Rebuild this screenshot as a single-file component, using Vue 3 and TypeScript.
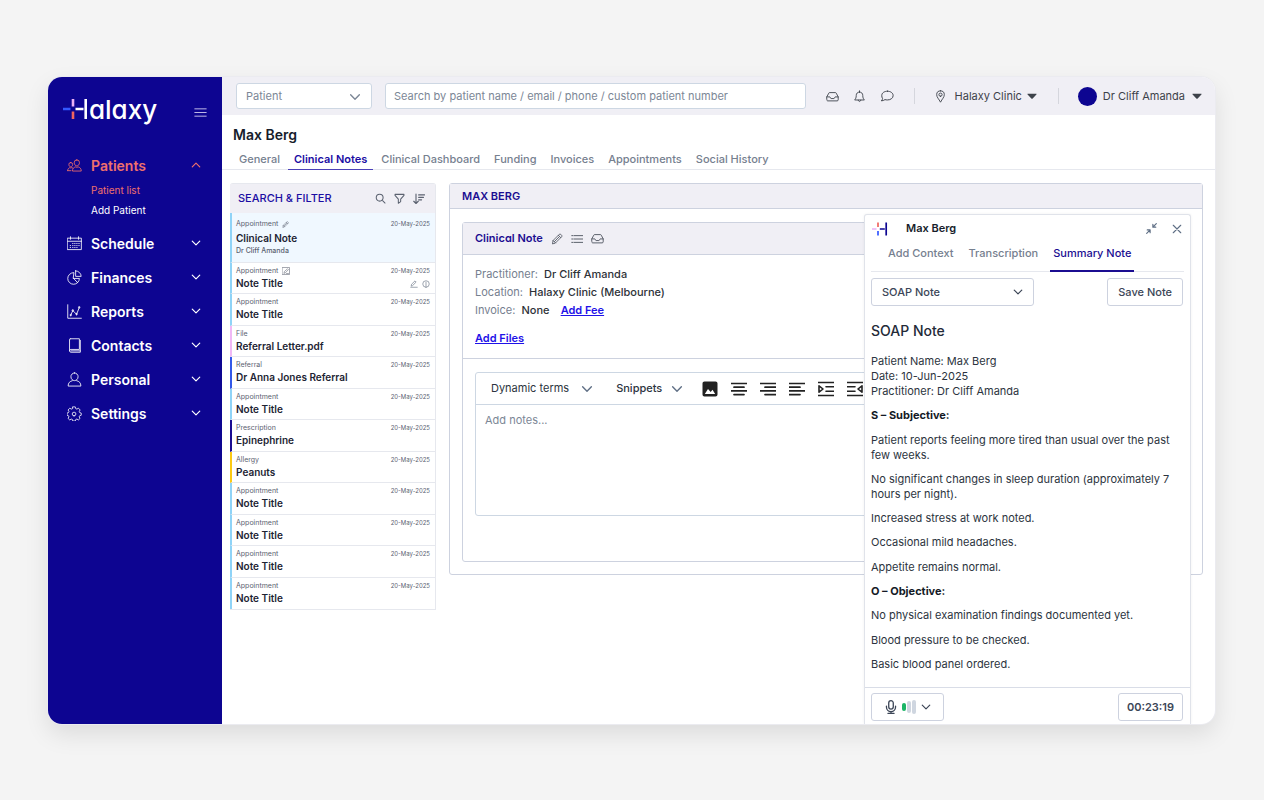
<script setup lang="ts">
import { h, ref } from 'vue'

type IconDef = { d: string[]; fill?: boolean; w?: number; box?: number }

const icons: Record<string, IconDef> = {
  menu: { d: ['M1 3.500h14M1 8h14M1 12.500h14'] },
  down: { d: ['M3 5.5l5 5 5-5'], w: 1.6 },
  up: { d: ['M3 10.5l5-5 5 5'], w: 1.6 },
  caret: { d: ['M2.5 5h11c.6 0 .8.6.4 1l-5 5.3c-.5.5-1.300.5-1.800 0l-5-5.300c-.4-.4-.2-1 .4-1z'], fill: true },
  patients: { d: ['M10.500 2a2.800 2.800 0 0 1 2.800 3c0 1.800-1.200 3.400-2.800 3.400S7.700 6.800 7.700 5a2.800 2.800 0 0 1 2.800-3z', 'M5.800 13.500c0-2.300 1.500-3.500 3.200-4 1 .5 2 .5 3 0 1.700.5 3.200 1.700 3.200 4z', 'M4 4.800a2 2 0 0 1 2 2.200c0 1.400-.9 2.400-2 2.400s-2-1-2-2.400a2 2 0 0 1 2-2.200z', 'M.7 13.500c0-1.700.9-2.700 2.200-3.200.8.4 1.500.4 2.200 0l1 .4M.7 13.500h3.500'], w: 0.9 },
  schedule: { d: ['M.7 2.300h14.600v12.200H.7z', 'M.7 5.600h14.600M3.700.8v2.700M12.300.8v2.700', 'M6 8h.4M8.200 8h.4M10.400 8h.4M12.600 8h.4M3.400 10.200h.4M6 10.200h.4M8.200 10.200h.4M10.400 10.200h.4M12.600 10.200h.4M3.400 12.300h.4M6 12.300h.4M8.200 12.300h.4M10.400 12.300h.4'], w: 0.9 },
  finances: { d: ['M7 2.800a6.200 6.200 0 1 0 6.200 6.200H7z', 'M9.200.9v5.900h5.900A6 6 0 0 0 9.200.9z', 'M7 9l4.300 4.500'], w: 0.9 },
  reports: { d: ['M.8.8v14.400h14.500', 'M4 11.800L6.200 7l4 4L13 4', 'M4 12.600a.8.8 0 1 0 0-1.600.8.8 0 0 0 0 1.600M6.200 7.600a.8.8 0 1 0 0-1.600.8.8 0 0 0 0 1.600M10.200 11.600a.8.8 0 1 0 0-1.600.8.8 0 0 0 0 1.600M13 4.300a.8.8 0 1 0 0-1.600.8.8 0 0 0 0 1.600'], w: 0.9 },
  contacts: { d: ['M3.500.8h9.700v11.400H4.300a1.500 1.500 0 0 0 0 3h9.900V2.500', 'M2.700 13.700V1.800c0-.6.3-1 .8-1M4.500 13.700h9.500'], w: 0.9 },
  personal: { d: ['M8 1a3.800 3.800 0 0 1 3.800 4.100C11.800 7.500 10 9.200 8 9.200S4.200 7.500 4.200 5.100A3.800 3.800 0 0 1 8 1z', 'M5.600 9.300C3 10 1.200 11.500 1.200 15h13.600c0-3.500-1.800-5-4.400-5.700'], w: 0.9 },
  settings: { d: ['M6.600 1h2.800l.5 2 1.300.5 1.800-1 1.900 2-1 1.700.5 1.300 1.700.5v2.500l-1.800.6-.5 1.200 1 1.700-1.900 1.800-1.700-1-1.300.5-.5 1.700H6.600l-.5-1.700-1.300-.5-1.700 1-1.900-1.800 1-1.700-.5-1.200L0 10.500V8l1.700-.5.5-1.300-1-1.700 1.900-2 1.800 1 1.200-.5z', 'M8 11.200a2.100 2.100 0 1 0 0-4.200 2.100 2.100 0 0 0 0 4.200z'], w: 0.9, box: 17 },
  inbox: { d: ['M1 8.500l2.400-4.600c.2-.5.5-.7 1-.7h7.200c.5 0 .8.2 1 .7L15 8.500v3.600c0 .8-.5 1.300-1.300 1.300H2.300c-.8 0-1.300-.5-1.300-1.300z', 'M1 8.500h3.800c.5 0 .5 2 1.500 2h3.400c1 0 1-2 1.500-2H15'] },
  bell: { d: ['M8 1v1.500M8 2.500c-2.700 0-4 1.900-4 4.200 0 3-.9 4.300-2 5.600h12c-1.100-1.300-2-2.600-2-5.600 0-2.300-1.300-4.200-4-4.200z', 'M6.500 12.500c0 2.300 3 2.300 3 0'] },
  chat: { d: ['M8.500 2.500c3.700 0 6.500 2.100 6.500 5s-2.800 5-6.500 5c-1 0-2-.1-2.800-.4-1 .9-2.500 1.400-4.200 1.400.9-.8 1.400-1.700 1.400-2.700C2.300 9.900 2 8.700 2 7.500c0-2.900 2.800-5 6.500-5z'] },
  pin: { d: ['M8 1a4.700 4.700 0 0 1 4.700 4.700C12.700 9 10 11 8 15 6 11 3.300 9 3.300 5.700A4.700 4.700 0 0 1 8 1z', 'M8 7.800a2 2 0 1 0 0-4 2 2 0 0 0 0 4z'] },
  search: { d: ['M6.800 11.800a5 5 0 1 0 0-10 5 5 0 0 0 0 10zM10.400 10.400l4.200 4.200'], w: 1.5 },
  filter: { d: ['M1.500 2h13v1.500L9.700 9v3.500L6.300 15V9L1.500 3.500z'], w: 1.5 },
  sort: { d: ['M4 1.500v12.500M1 11l3 3 3-3M7.500 2.500h8M7.500 5.800h6.500M7.500 9.100h4'], w: 1.5 },
  pencil: { d: ['M2 14l.8-4L11 1.800c.6-.6 1.400-.6 2 0l1.200 1.200c.6.600.6 1.400 0 2L6 13.200z', 'M2.800 10L6 13.200M9.800 3l3.200 3.200M4.600 11.400l6.200-6.200'] },
  list: { d: ['M1 3.500h1.500M1 8h1.500M1 12.500h1.500M4 3.500h11.500M4 8h11.500M4 12.500h11.500'], w: 1.2 },
  editbox: { d: ['M1 1h14v14H1z', 'M4 12l.8-3L11 3.500l1.800 1.800L7 11.300zM9 13h4'] },
  editline: { d: ['M2.500 11.500l.6-3L10 1.800l2.300 2.300-6.800 6.700zM1.500 14.500h13'], w: 1.4 },
  info: { d: ['M8 14.500a6.500 6.500 0 1 0 0-13 6.500 6.500 0 0 0 0 13zM8 4.500v4.500M8 10.500v1.500'], w: 1.4 },
  image: { d: ['M2.500.5h11c1.200 0 2 .8 2 2v11c0 1.200-.8 2-2 2h-11c-1.200 0-2-.8-2-2v-11c0-1.200.8-2 2-2zM2.800 13h10.400L10.500 8.800 8.700 11 6 8z'], fill: true },
  center: { d: ['M0 2.500h16M3 6.200h10M0 9.900h16M3 13.600h10'], w: 1.7 },
  right: { d: ['M0 2.500h16M5 6.200h11M0 9.900h16M5 13.600h11'], w: 1.7 },
  left: { d: ['M0 2.500h16M0 6.200h11M0 9.900h16M0 13.600h11'], w: 1.7 },
  indent: { d: ['M0 1.500h16M8 5.800h8M8 10.200h8M0 14.500h16M1 4.800v6.400L5 8z'], w: 1.6 },
  outdent: { d: ['M0 1.500h16M0 5.800h8M0 10.200h8M0 14.500h16M15 4.800v6.400L11 8z'], w: 1.6 },
  collapse: { d: ['M15 1l-5 5M10 1.800V6h4.200M1 15l5-5M6 14.200V10H1.800'], w: 1.7 },
  close: { d: ['M2 2l12 12M14 2L2 14'], w: 1.8 },
  mic: { d: ['M8 .8a2.600 2.600 0 0 1 2.600 2.600v4.400a2.600 2.600 0 0 1-5.200 0V3.400A2.600 2.600 0 0 1 8 .8z', 'M2.800 7v1a5.200 5.200 0 0 0 10.400 0V7M8 13.200v2M4.500 15.200h7'], w: 1.5 },
}

const Icon = (props: { name: string; size?: number }) => {
  const def = icons[props.name]
  const box = def.box ?? 16
  const size = props.size ?? 14
  return h(
    'svg',
    {
      width: size,
      height: size,
      viewBox: `0 0 ${box} ${box}`,
      fill: def.fill ? 'currentColor' : 'none',
      'fill-rule': 'evenodd',
      stroke: def.fill ? 'none' : 'currentColor',
      'stroke-width': def.w ?? 1.1,
      'stroke-linecap': 'round',
      'stroke-linejoin': 'round',
      'aria-hidden': 'true',
    },
    def.d.map((d) => h('path', { d })),
  )
}
Icon.props = ['name', 'size']

const nav = [
  { label: 'Schedule', icon: 'schedule' },
  { label: 'Finances', icon: 'finances' },
  { label: 'Reports', icon: 'reports' },
  { label: 'Contacts', icon: 'contacts' },
  { label: 'Personal', icon: 'personal' },
  { label: 'Settings', icon: 'settings' },
]

const tabs = ['General', 'Clinical Notes', 'Clinical Dashboard', 'Funding', 'Invoices', 'Appointments', 'Social History']
const activeTab = ref('Clinical Notes')

const panelTabs = ['Add Context', 'Transcription', 'Summary Note']
const activePanelTab = ref('Summary Note')

type Note = { kind: string; title: string; tone: string; edit?: boolean }
const notes: Note[] = [
  { kind: 'Appointment', title: 'Note Title', tone: 'sky', edit: true },
  { kind: 'Appointment', title: 'Note Title', tone: 'sky' },
  { kind: 'File', title: 'Referral Letter.pdf', tone: 'pink' },
  { kind: 'Referral', title: 'Dr Anna Jones Referral', tone: 'blue' },
  { kind: 'Appointment', title: 'Note Title', tone: 'sky' },
  { kind: 'Prescription', title: 'Epinephrine', tone: 'navy' },
  { kind: 'Allergy', title: 'Peanuts', tone: 'yellow' },
  { kind: 'Appointment', title: 'Note Title', tone: 'sky' },
  { kind: 'Appointment', title: 'Note Title', tone: 'sky' },
  { kind: 'Appointment', title: 'Note Title', tone: 'sky' },
  { kind: 'Appointment', title: 'Note Title', tone: 'sky' },
]
const date = '20-May-2025'

const tools = [
  { name: 'image', label: 'Insert image' },
  { name: 'center', label: 'Align centre' },
  { name: 'right', label: 'Align right' },
  { name: 'left', label: 'Align left' },
  { name: 'indent', label: 'Increase indent' },
  { name: 'outdent', label: 'Decrease indent' },
]
</script>

<template>
  <div class="page">
    <div class="window">
      <aside class="sidebar">
        <div class="brand">
          <div class="logo">
            <svg width="24" height="28" viewBox="0 0 24 28" fill="none" stroke-width="2.6" aria-hidden="true">
              <path d="M0 11h7.500" stroke="#3358ff" />
              <path d="M10 1v7.500" stroke="#e9b0f5" />
              <path d="M10 13.500v7.500" stroke="#f0655f" />
              <path d="M12.500 11h8" stroke="#fff" />
              <path d="M22.700 1v20" stroke="#fff" />
            </svg>
            <span class="wordmark">alaxy</span>
          </div>
          <button class="plain menu" aria-label="Toggle menu"><Icon name="menu" :size="13" /></button>
        </div>
        <nav>
          <button class="nav-item current"><Icon name="patients" :size="15" /><span>Patients</span><Icon name="up" :size="12" /></button>
          <div class="sub">
            <a href="#" class="current">Patient list</a>
            <a href="#">Add Patient</a>
          </div>
          <button v-for="n in nav" :key="n.label" class="nav-item">
            <Icon :name="n.icon" :size="15" /><span>{{ n.label }}</span><Icon name="down" :size="12" />
          </button>
        </nav>
      </aside>

      <div class="content">
        <header class="topbar">
          <div class="select search-type">
            <select aria-label="Search type"><option>Patient</option></select>
            <Icon name="down" :size="14" />
          </div>
          <input class="search" type="text" aria-label="Search" placeholder="Search by patient name / email / phone / custom patient number" />
          <div class="quick">
            <button class="plain" aria-label="Inbox"><Icon name="inbox" :size="13" /></button>
            <button class="plain" aria-label="Notifications"><Icon name="bell" :size="13" /></button>
            <button class="plain" aria-label="Messages"><Icon name="chat" :size="14" /></button>
          </div>
          <button class="plain account clinic"><Icon name="pin" :size="13" /><span>Halaxy Clinic</span><Icon name="caret" :size="12" /></button>
          <button class="plain account user"><span class="avatar"></span>Dr Cliff Amanda<Icon name="caret" :size="12" /></button>
        </header>

        <h1>Max Berg</h1>
        <div class="tabs" role="tablist">
          <button v-for="t in tabs" :key="t" role="tab" :aria-selected="t === activeTab" :class="{ active: t === activeTab }" @click="activeTab = t">{{ t }}</button>
        </div>

        <main>
          <section class="notes">
            <header>
              <h2>SEARCH &amp; FILTER</h2>
              <button class="plain" aria-label="Search notes"><Icon name="search" :size="11" /></button>
              <button class="plain" aria-label="Filter notes"><Icon name="filter" :size="11" /></button>
              <button class="plain" aria-label="Sort notes"><Icon name="sort" :size="12" /></button>
            </header>
            <article class="note selected sky">
              <div class="meta"><span>Appointment</span><Icon name="pencil" :size="7" /><time>{{ date }}</time></div>
              <h3>Clinical Note</h3>
              <p>Dr Cliff Amanda</p>
            </article>
            <div class="rows">
              <article v-for="(n, i) in notes" :key="i" class="note" :class="n.tone">
                <div class="meta"><span>{{ n.kind }}</span><Icon v-if="n.edit" name="editbox" :size="8" /><time>{{ date }}</time></div>
                <div class="title">
                  <h3>{{ n.title }}</h3>
                  <template v-if="n.edit"><Icon name="editline" :size="8" /><Icon name="info" :size="8" /></template>
                </div>
              </article>
            </div>
          </section>

          <section class="record">
            <h2>MAX BERG</h2>
            <div class="card">
              <header>
                <h3>Clinical Note</h3>
                <button class="plain" aria-label="Edit note"><Icon name="pencil" :size="12" /></button>
                <button class="plain" aria-label="List"><Icon name="list" :size="12" /></button>
                <button class="plain" aria-label="Archive"><Icon name="inbox" :size="13" /></button>
              </header>
              <div class="details">
                <p>Practitioner: <b>Dr Cliff Amanda</b></p>
                <p>Location: <b>Halaxy Clinic (Melbourne)</b></p>
                <p>Invoice: <b>None</b> <a href="#" class="fee">Add Fee</a></p>
                <a href="#" class="files">Add Files</a>
              </div>
              <div class="editor">
                <div class="toolbar">
                  <button class="plain menu-btn">Dynamic terms<Icon name="down" :size="14" /></button>
                  <button class="plain menu-btn strong">Snippets<Icon name="down" :size="14" /></button>
                  <button v-for="t in tools" :key="t.name" class="plain tool" :aria-label="t.label"><Icon :name="t.name" :size="16" /></button>
                </div>
                <textarea aria-label="Notes" placeholder="Add notes..."></textarea>
              </div>
            </div>
          </section>
        </main>
      </div>

      <aside class="assistant">
        <header>
          <svg width="16" height="14" viewBox="0 0 16 14" fill="none" stroke-width="1.7" aria-hidden="true">
            <path d="M0 7h4.500" stroke="#e9b0f5" />
            <path d="M6 .5v4.500" stroke="#f0655f" />
            <path d="M6 9v4.500" stroke="#3358ff" />
            <path d="M7.800 7h5M14.200.5v13" stroke="#0d0591" />
          </svg>
          <h2>Max Berg</h2>
          <button class="plain" aria-label="Collapse"><Icon name="collapse" :size="11" /></button>
          <button class="plain" aria-label="Close"><Icon name="close" :size="10" /></button>
        </header>
        <div class="panel-tabs" role="tablist">
          <button v-for="t in panelTabs" :key="t" role="tab" :aria-selected="t === activePanelTab" :class="{ active: t === activePanelTab }" @click="activePanelTab = t">{{ t }}</button>
        </div>
        <div class="actions">
          <div class="select template">
            <select aria-label="Note template"><option>SOAP Note</option></select>
            <Icon name="down" :size="12" />
          </div>
          <button class="outline">Save Note</button>
        </div>
        <h3>SOAP Note</h3>
        <div class="summary">
          <p>Patient Name: Max Berg<br />Date: 10-Jun-2025<br />Practitioner: Dr Cliff Amanda</p>
          <h4>S – Subjective:</h4>
          <p>Patient reports feeling more tired than usual over the past few weeks.</p>
          <p>No significant changes in sleep duration (approximately 7 hours per night).</p>
          <p>Increased stress at work noted.</p>
          <p>Occasional mild headaches.</p>
          <p>Appetite remains normal.</p>
          <h4>O – Objective:</h4>
          <p>No physical examination findings documented yet.</p>
          <p>Blood pressure to be checked.</p>
          <p>Basic blood panel ordered.</p>
        </div>
        <footer>
          <button class="outline mic" aria-label="Microphone">
            <Icon name="mic" :size="14" />
            <span class="levels"><i></i><i></i><i></i></span>
            <Icon name="down" :size="12" />
          </button>
          <div class="outline timer">00:23:19</div>
        </footer>
      </aside>
    </div>
  </div>
</template>

<style>
body {
  margin: 0;
  background: #f4f4f4;
}
</style>

<style scoped>
.page {
  box-sizing: border-box;
  min-height: 100vh;
  padding: 77px 49px 76px 48px;
  display: flex;
  font-family: Inter, 'Liberation Sans', sans-serif;
  font-size: 11px;
  line-height: 15px;
  color: #2c3440;
}
.page *,
.page svg {
  box-sizing: border-box;
}
.page svg {
  display: block;
  flex: none;
}
h1, h2, h3, h4, p {
  margin: 0;
  font-size: inherit;
  font-weight: 500;
}
button, select, input, textarea {
  font: inherit;
  color: inherit;
  margin: 0;
}
.plain {
  border: 0;
  padding: 0;
  background: none;
}
.window {
  position: relative;
  flex: 1;
  display: grid;
  grid-template-columns: 174px minmax(0, 1fr);
  background: #fff;
  border-radius: 14px;
  overflow: hidden;
  box-shadow: 0 0 0 1px #ebebf0, 0 10px 24px rgba(0, 0, 0, 0.1);
}

/* Sidebar */
.sidebar {
  background: #0d0591;
  color: #fff;
}
.brand {
  display: flex;
  align-items: center;
  justify-content: space-between;
  height: 48px;
  margin: 11px 15px 12px;
}
.logo {
  display: flex;
  align-items: center;
}
.wordmark {
  margin: -4px 0 0 2px;
  font-size: 26px;
  line-height: 32px;
  font-weight: 500;
  font-feature-settings: 'cv11';
}
.menu {
  color: #d3cff0;
}
.nav-item {
  display: flex;
  align-items: center;
  width: 100%;
  height: 34px;
  padding: 0 20px 0 19px;
  border: 0;
  background: none;
  font-size: 14px;
  font-weight: 600;
  text-align: left;
}
.nav-item span {
  flex: 1;
  margin-left: 9px;
}
.sub {
  display: flex;
  flex-direction: column;
  margin-top: -2px;
  padding: 0 0 6px 43px;
  font-size: 10px;
  line-height: 20px;
}
.sub a {
  color: #fff;
  text-decoration: none;
}
.sidebar .current {
  color: #f0706c;
}

/* Top bar */
.topbar {
  display: flex;
  align-items: center;
  height: 38px;
  padding: 0 12px 0 14px;
  background: #f0eff5;
  color: #3d424a;
}
.select {
  position: relative;
  display: flex;
}
.select select {
  appearance: none;
  width: 100%;
  height: 100%;
  padding: 0 9px;
  border: 1px solid #cdd7e3;
  border-radius: 3px;
  background: #fff;
}
.select svg {
  position: absolute;
  right: 10px;
  top: 50%;
  margin-top: -6px;
  pointer-events: none;
}
.search-type {
  width: 136px;
  height: 26px;
  color: #7c8796;
}
.search {
  flex: 1;
  min-width: 0;
  height: 26px;
  margin-left: 13px;
  padding: 0 8px;
  border: 1px solid #cdd7e3;
  border-radius: 3px;
  background: #fff;
}
.search::placeholder,
textarea::placeholder {
  color: #7c8796;
  opacity: 1;
}
.quick {
  display: flex;
  gap: 14px;
  padding: 0 20px;
}
.account {
  display: flex;
  align-items: center;
  height: 16px;
  border-left: 1px solid #d5d6dd;
  padding-left: 19px;
}
.clinic {
  gap: 4px;
  padding-right: 20px;
}
.clinic span {
  margin-left: 4px;
}
.user {
  gap: 6px;
}
.avatar {
  width: 19px;
  height: 19px;
  border-radius: 50%;
  background: #0d0591;
}

/* Patient heading */
h1 {
  margin: 10px 0 0 11px;
  font-size: 14px;
  line-height: 20px;
  font-weight: 600;
  color: #171d2b;
}
.tabs {
  display: flex;
  gap: 2px;
  height: 25px;
  padding-left: 11px;
  border-bottom: 1px solid #e6e8ee;
}
.tabs button,
.panel-tabs button {
  border: 0;
  border-bottom: 1px solid transparent;
  background: none;
  color: #76808f;
  font-weight: 500;
  white-space: nowrap;
}
.tabs button {
  height: 25px;
  padding: 4px 6px 0;
}
.tabs .active {
  color: #1b0da3;
  border-color: #4a40b8;
  font-weight: 600;
}

main {
  display: grid;
  grid-template-columns: 206px minmax(0, 1fr);
  align-items: start;
  gap: 13px;
  padding: 13px 12px 13px 8px;
}

/* Notes list */
.notes {
  border: 1px solid #e6e8ee;
  border-left: 0;
  border-radius: 3px 3px 0 0;
}
.notes header {
  display: flex;
  align-items: center;
  gap: 8px;
  height: 29px;
  padding: 0 10px 0 8px;
  background: #f0eff5;
  color: #5b6270;
}
.notes h2 {
  flex: 1;
  color: #1b0da3;
}
.note {
  display: flex;
  flex-direction: column;
  padding: 3px 5px 0 4px;
  border-left: 2px solid #8fd3f7;
  border-bottom: 1px solid #e6e8ee;
}
.selected {
  height: 50px;
  padding-top: 6px;
  background: #f0f8ff;
}
.rows {
  display: grid;
  grid-auto-rows: 1fr;
  min-height: 346px;
}
.rows .note:last-child {
  border-bottom: 0;
}
.pink { border-left-color: #f0b8f5; }
.blue { border-left-color: #3358e8; }
.navy { border-left-color: #1b0d91; }
.yellow { border-left-color: #fbc913; }
.meta {
  display: flex;
  align-items: center;
  gap: 4px;
  font-size: 7px;
  line-height: 10px;
  color: #5b6270;
}
.meta time {
  margin-left: auto;
  font-size: 6px;
}
.note h3 {
  flex: 1;
  font-size: 10px;
  line-height: 15px;
  font-weight: 600;
  color: #1d2433;
}
.selected h3 {
  flex: none;
  margin-top: 2px;
}
.note p {
  font-size: 7px;
  line-height: 10px;
  color: #5b6270;
}
.title {
  display: flex;
  align-items: center;
  gap: 4px;
  color: #76808f;
}

/* Clinical record */
.record,
.card {
  border: 1px solid #cdd2df;
  border-radius: 3px;
}
.record > h2 {
  padding: 5px 12px 4px;
  background: #f0eff5;
  border-bottom: 1px solid #cdd2df;
  color: #1b0d91;
  font-weight: 600;
}
.card {
  margin: 13px 12px 12px;
}
.card header {
  display: flex;
  align-items: center;
  gap: 8px;
  height: 32px;
  padding: 0 12px;
  background: #f0eff5;
  border-bottom: 1px solid #cdd2df;
  color: #4b515c;
}
.card h3 {
  font-weight: 600;
  color: #1b0d91;
  font-feature-settings: 'cv11';
}
.details {
  padding: 10px 12px 11px;
  line-height: 18px;
  color: #76808f;
  border-bottom: 1px solid #cdd2df;
}
.details b {
  margin-left: 3px;
  font-weight: 500;
  color: #2e3238;
}
.details p {
  font-weight: 400;
}
.details a {
  font-weight: 600;
  color: #1f12e8;
}
.fee {
  margin-left: 8px;
}
.files {
  display: inline-block;
  margin-top: 10px;
}
.editor {
  margin: 13px 12px 45px;
  border: 1px solid #cdd7e3;
  border-radius: 3px;
}
.toolbar {
  display: flex;
  align-items: center;
  height: 32px;
  padding-left: 15px;
  border-bottom: 1px solid #cdd7e3;
  overflow: hidden;
}
.menu-btn {
  display: flex;
  align-items: center;
  gap: 11px;
  margin-right: 22px;
}
.menu-btn svg {
  color: #5f6f85;
}
.strong {
  gap: 8px;
  margin-right: 18px;
  font-weight: 500;
}
.tool {
  margin-right: 13px;
  color: #222;
}
textarea {
  display: block;
  width: 100%;
  height: 110px;
  padding: 8px 9px;
  border: 0;
  resize: none;
  background: none;
}

/* Floating assistant */
.assistant {
  position: absolute;
  top: 137px;
  right: 24px;
  bottom: 0;
  width: 327px;
  display: flex;
  flex-direction: column;
  background: #fff;
  border: 1px solid #e0e3ea;
  border-bottom: 0;
  border-radius: 3px 3px 0 0;
  box-shadow: 0 0 3px rgba(0, 0, 0, 0.06);
}
.assistant header {
  display: flex;
  align-items: center;
  gap: 15px;
  height: 27px;
  padding: 0 8px 0 7px;
  color: #5f6f85;
}
.assistant h2 {
  flex: 1;
  margin-left: 3px;
  font-weight: 600;
  color: #171d2b;
}
.panel-tabs {
  display: flex;
  gap: 9px;
  height: 30px;
  margin: 0 6px;
  padding-left: 14px;
  border-bottom: 1px solid #e6e8ee;
}
.panel-tabs button {
  height: 30px;
  padding: 0 3px 5px;
  border-bottom-width: 2px;
}
.panel-tabs .active {
  color: #1b0d91;
  border-color: #1b0d91;
}
.actions {
  display: flex;
  justify-content: space-between;
  margin: 6px 7px 0 6px;
}
.template {
  width: 163px;
  height: 28px;
  color: #3c4657;
}
.template select,
.outline {
  padding: 0 10px;
  border: 1px solid #cdd2df;
  border-radius: 3px;
  background: #fff;
  font-weight: 500;
  color: #3c4657;
}
.outline {
  height: 28px;
}
.assistant h3 {
  margin: 15px 6px 0;
  font-size: 14px;
  line-height: 20px;
  color: #232a38;
}
.summary {
  flex: 1;
  display: flex;
  flex-direction: column;
  justify-content: space-between;
  gap: 9px;
  padding: 13px 18px 15px 6px;
}
.summary p {
  font-weight: 400;
}
.summary h4 {
  font-weight: 700;
  color: #141a26;
}
.assistant footer {
  display: flex;
  justify-content: space-between;
  padding: 5px 7px 3px 6px;
  border-top: 1px solid #d9dde7;
}
.outline.mic {
  display: flex;
  align-items: center;
  justify-content: center;
  gap: 4px;
  width: 73px;
}
.levels {
  display: flex;
  align-items: center;
  gap: 1px;
}
.levels i {
  width: 4px;
  height: 14px;
  border-radius: 2px;
  background: #cfd6e0;
}
.levels i:first-child {
  height: 8px;
  background: #1bb566;
}
.levels i:nth-child(2) {
  height: 12px;
}
.outline.timer {
  padding: 0 8px;
  line-height: 26px;
  font-weight: 600;
}
</style>
